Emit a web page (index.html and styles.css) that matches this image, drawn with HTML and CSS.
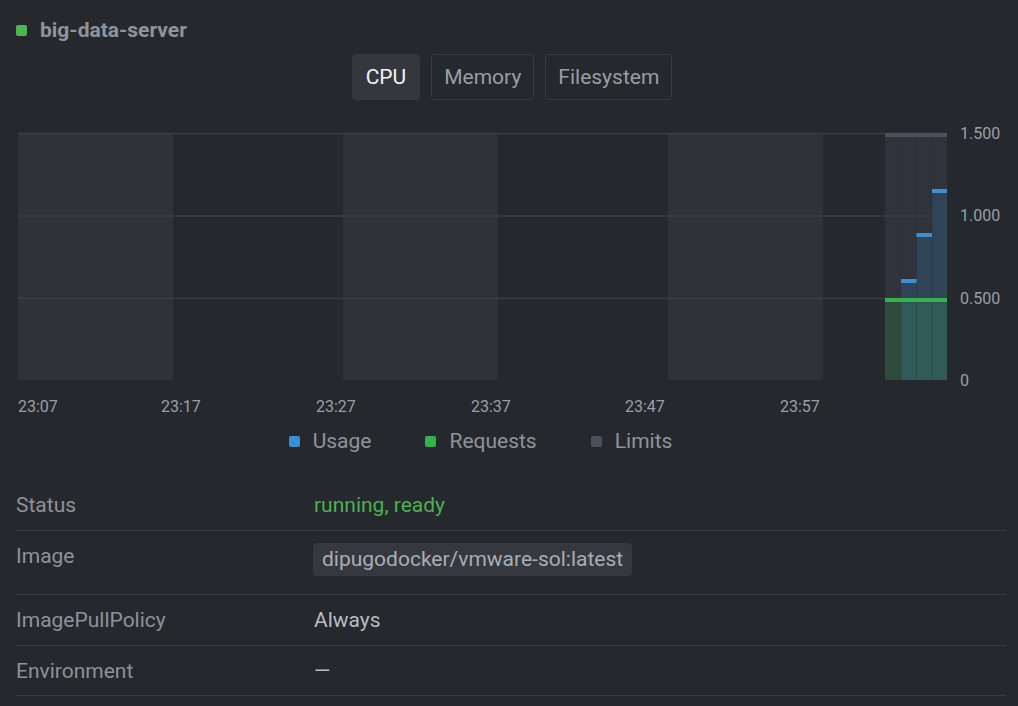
FILE: index.html
```html
<!DOCTYPE html>
<html>
<head>
<meta charset="utf-8">
<link rel="stylesheet" href="styles.css">
</head>
<body>
<div class="page">
  <div class="title"><span class="dot"></span><span class="name">big-data-server</span></div>
  <div class="tabs">
    <button class="tab active">CPU</button>
    <button class="tab">Memory</button>
    <button class="tab">Filesystem</button>
  </div>
  <svg class="chart" width="1018" height="310" viewBox="0 110 1018 310">
    <g class="bands">
      <rect x="18" y="133" width="155" height="247" fill="#2e3337"/>
      <rect x="343" y="133" width="155" height="247" fill="#2e3337"/>
      <rect x="668" y="133" width="155" height="247" fill="#2e3337"/>
    </g>
    <rect x="885" y="133" width="62" height="247" fill="#2f333b"/>
    <g stroke="#3b3f45" stroke-width="1.5">
      <line x1="18" y1="133.5" x2="947" y2="133.5"/>
      <line x1="18" y1="216" x2="947" y2="216"/>
      <line x1="18" y1="298.5" x2="947" y2="298.5"/>
    </g>
    <rect x="885" y="300" width="16" height="80" fill="#2d4a3b"/>
    <rect x="901" y="281" width="15.5" height="19" fill="#2f4456"/>
    <rect x="916.5" y="235" width="15.5" height="65" fill="#2f4456"/>
    <rect x="932" y="191" width="15" height="109" fill="#2f4456"/>
    <rect x="901" y="300" width="46" height="80" fill="#2f5a58"/>
    <g stroke="#262b30" stroke-opacity="0.3" stroke-width="1">
      <line x1="901" y1="133" x2="901" y2="380"/>
      <line x1="916.5" y1="133" x2="916.5" y2="380"/>
      <line x1="932" y1="133" x2="932" y2="380"/>
    </g>
    <rect x="885" y="133" width="62" height="4" fill="#4b505b"/>
    <rect x="885" y="298" width="62" height="4" fill="#35b14c"/>
    <rect x="901" y="279" width="15.5" height="4" fill="#3d8fd3"/>
    <rect x="916.5" y="233" width="15.5" height="4" fill="#3d8fd3"/>
    <rect x="932" y="189" width="15" height="4" fill="#3d8fd3"/>
    <g class="ylab">
      <text x="960" y="138.5">1.500</text>
      <text x="960" y="221">1.000</text>
      <text x="960" y="303.5">0.500</text>
      <text x="960" y="385.5">0</text>
    </g>
    <g class="xlab">
      <text x="18" y="411.5">23:07</text>
      <text x="161" y="411.5">23:17</text>
      <text x="316" y="411.5">23:27</text>
      <text x="471" y="411.5">23:37</text>
      <text x="625" y="411.5">23:47</text>
      <text x="780" y="411.5">23:57</text>
    </g>
  </svg>
  <div class="legend">
    <span class="item"><span class="sw usage"></span>Usage</span>
    <span class="item"><span class="sw req"></span>Requests</span>
    <span class="item"><span class="sw lim"></span>Limits</span>
  </div>
  <div class="props">
    <div class="row"><div class="label">Status</div><div class="value green">running, ready</div></div>
    <div class="row"><div class="label">Image</div><div class="value"><span class="chip">dipugodocker/vmware-sol:latest</span></div></div>
    <div class="row"><div class="label">ImagePullPolicy</div><div class="value">Always</div></div>
    <div class="row"><div class="label">Environment</div><div class="value">—</div></div>
  </div>
</div>
</body>
</html>
```
FILE: styles.css
```css
html, body {
  margin: 0;
  padding: 0;
  background: #25292e;
  font-family: Roboto, "Liberation Sans", sans-serif;
  color: #9ea2a8;
}
.page {
  width: 1018px;
  height: 706px;
  overflow: hidden;
}
.title {
  display: flex;
  align-items: center;
  padding: 18px 0 0 16px;
  height: 24px;
}
.dot {
  width: 11px;
  height: 11px;
  border-radius: 2px;
  background: #4db552;
  margin-right: 13px;
}
.name {
  font-weight: 700;
  font-size: 21px;
  color: #90949a;
}
.tabs {
  display: flex;
  justify-content: center;
  gap: 11px;
  margin-top: 12px;
  padding-left: 6px;
}
.tab {
  height: 46px;
  padding: 0 12px;
  border: 1px solid #393d43;
  border-radius: 4px;
  background: #25292e;
  color: #9a9ea4;
  font-family: Roboto, "Liberation Sans", sans-serif;
  font-size: 21px;
}
.tab.active {
  padding: 0 13px;
  background: #34383d;
  border-color: #34383d;
  color: #f2f3f4;
}
.chart {
  display: block;
  margin-top: 10px;
}
.chart text {
  font-family: Roboto, "Liberation Sans", sans-serif;
  font-size: 16px;
  fill: #9b9fa5;
}
.legend {
  display: flex;
  justify-content: center;
  gap: 54px;
  margin-top: 8px;
  padding-right: 57px;
  font-size: 21px;
  color: #8f949a;
  line-height: 26px;
}
.item {
  display: flex;
  align-items: center;
}
.sw {
  width: 11px;
  height: 11px;
  border-radius: 2px;
  margin-right: 13px;
}
.usage { background: #3a8fd6; }
.req { background: #33b24d; }
.lim { background: #4b505b; }
.props {
  margin: 26px 12px 0 16px;
}
.row {
  display: flex;
  align-items: flex-start;
  padding: 12px 0 11px;
  border-bottom: 1px solid #393d43;
  font-size: 21px;
  line-height: 27px;
}
.row:last-child {
  padding-bottom: 10px;
}
.label {
  width: 298px;
  color: #8d9299;
}
.value {
  color: #b9bcc0;
}
.value.green {
  color: #4cb050;
}
.chip {
  display: inline-block;
  background: #35393f;
  border-radius: 4px;
  padding: 3px 9px;
  margin: 0 0 7px -1px;
  color: #a9adb2;
}
```
